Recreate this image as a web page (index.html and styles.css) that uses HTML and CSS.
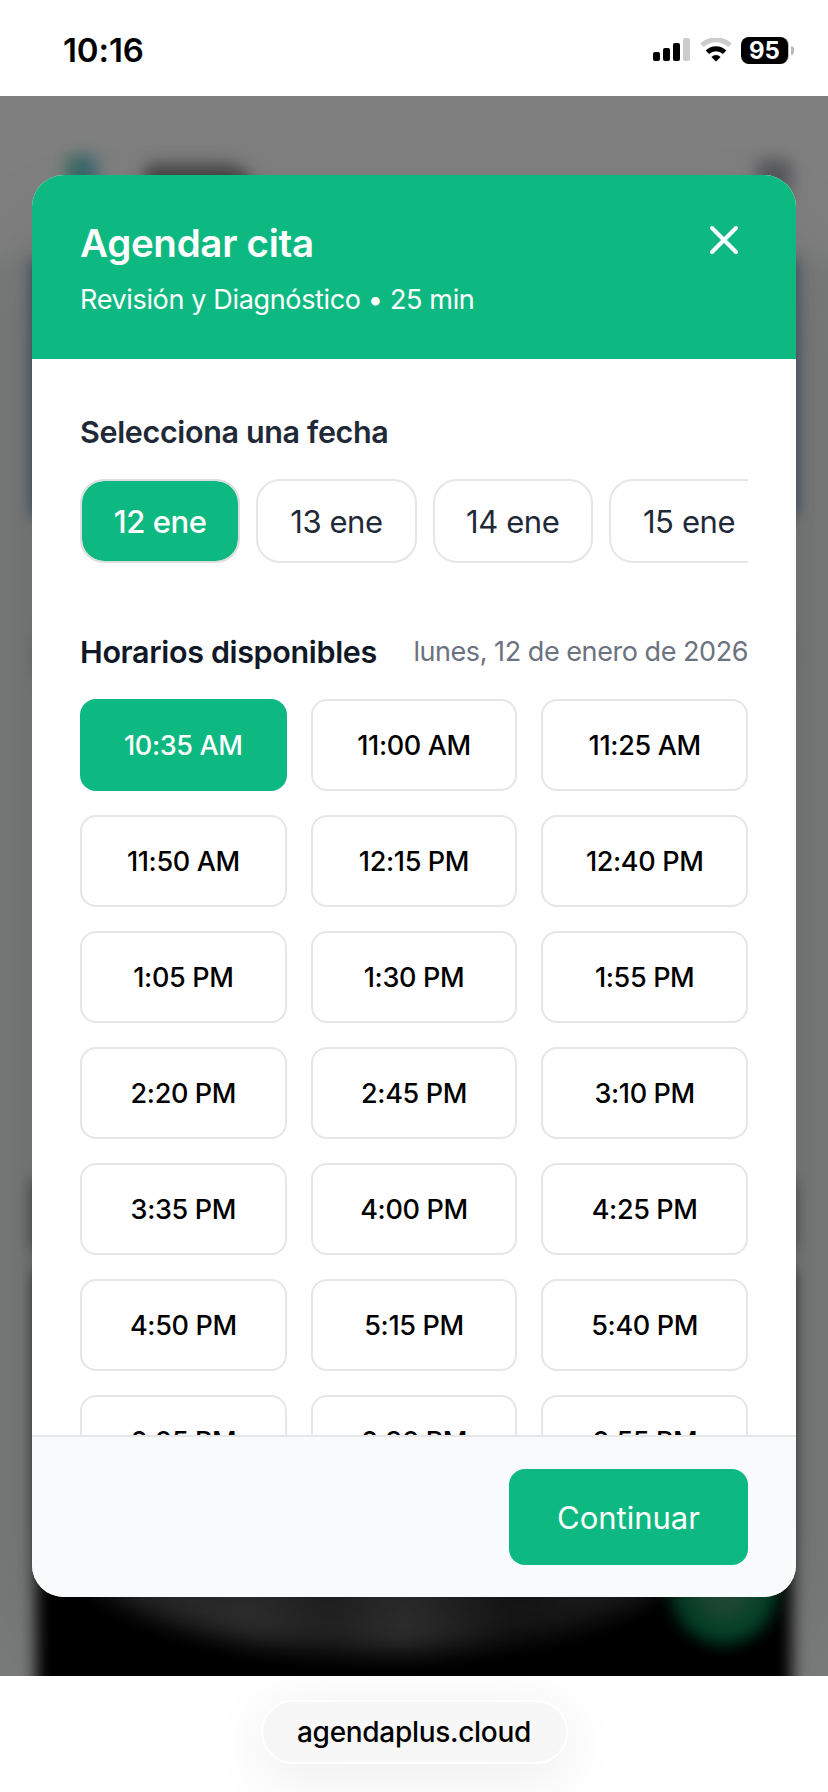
FILE: index.html
```html
<!DOCTYPE html>
<html lang="es">
<head>
  <meta charset="UTF-8" />
  <meta name="viewport" content="width=device-width, initial-scale=1" />
  <title>Agendar cita</title>
  <link rel="stylesheet" href="styles.css">
</head>
<body>

<div class="status-bar">
  <span class="clock">10:16</span>
  <div class="status-icons">
    <svg class="signal" viewBox="0 0 37 24">
      <rect x="0" y="14" width="7" height="9" rx="2"/>
      <rect x="10" y="10" width="7" height="13" rx="2"/>
      <rect x="20" y="5" width="7" height="18" rx="2"/>
      <rect class="off" x="30" y="0" width="7" height="23" rx="2"/>
    </svg>
    <svg class="wifi" viewBox="0 0 32 24">
      <path class="arc off" d="M2 7.2 A20.5 20.5 0 0 1 30 7.2"/>
      <path class="arc" d="M7.4 14.2 A12.2 12.2 0 0 1 24.6 14.2"/>
      <path d="M16 23.4 L11.4 19 A6.4 6.4 0 0 1 20.6 19 Z"/>
    </svg>
    <div class="battery"><span>95</span></div>
    <i class="battery-tip"></i>
  </div>
</div>

<main class="viewport">
  <!-- blurred page behind the modal -->
  <div class="page-behind">
    <i class="shape logo"></i>
    <i class="shape brand"></i>
    <i class="shape menu"></i>
    <i class="shape content"></i>
    <i class="shape hero"></i>
    <i class="shape card"></i>
    <i class="shape label"></i>
    <i class="shape photo"></i>
    <i class="shape glow"></i>
    <i class="shape chat"></i>
  </div>

  <div class="modal">
    <header class="modal-header">
      <div>
        <h1>Agendar cita</h1>
        <p>Revisión y Diagnóstico • 25 min</p>
      </div>
      <button class="close" aria-label="Cerrar">
        <svg viewBox="0 0 24 24"><path d="M6 18L18 6M6 6l12 12"/></svg>
      </button>
    </header>

    <div class="modal-body">
      <h2 class="date-title">Selecciona una fecha</h2>
      <div class="dates">
        <button class="date active">12 ene</button>
        <button class="date">13 ene</button>
        <button class="date">14 ene</button>
        <button class="date">15 ene</button>
      </div>

      <div class="times-head">
        <h2>Horarios disponibles</h2>
        <span>lunes, 12 de enero de 2026</span>
      </div>
      <div class="times">
        <button class="time active">10:35 AM</button>
        <button class="time">11:00 AM</button>
        <button class="time">11:25 AM</button>
        <button class="time">11:50 AM</button>
        <button class="time">12:15 PM</button>
        <button class="time">12:40 PM</button>
        <button class="time">1:05 PM</button>
        <button class="time">1:30 PM</button>
        <button class="time">1:55 PM</button>
        <button class="time">2:20 PM</button>
        <button class="time">2:45 PM</button>
        <button class="time">3:10 PM</button>
        <button class="time">3:35 PM</button>
        <button class="time">4:00 PM</button>
        <button class="time">4:25 PM</button>
        <button class="time">4:50 PM</button>
        <button class="time">5:15 PM</button>
        <button class="time">5:40 PM</button>
        <button class="time">6:05 PM</button>
        <button class="time">6:30 PM</button>
        <button class="time">6:55 PM</button>
      </div>
    </div>

    <footer class="modal-footer">
      <button class="continue">Continuar</button>
    </footer>
  </div>
</main>

<div class="url-bar">
  <div class="url">agendaplus.cloud</div>
</div>

</body>
</html>
```
FILE: styles.css
```css
* {
  box-sizing: border-box;
}
body {
  margin: 0;
  height: 1792px;
  display: flex;
  flex-direction: column;
  background: #fff;
  font-family: Inter, "Liberation Sans", sans-serif;
  overflow: hidden;
}
h1, h2, p {
  margin: 0;
}
button {
  font-family: inherit;
  padding: 0;
  border: 0;
  background: none;
  white-space: nowrap;
}

/* status bar */
.status-bar {
  flex: none;
  height: 96px;
  padding: 4px 34px 0 63px;
  display: flex;
  align-items: center;
  justify-content: space-between;
}
.clock {
  font-size: 33px;
  font-weight: 600;
  letter-spacing: -0.1px;
}
.status-icons {
  display: flex;
  align-items: center;
}
.signal {
  width: 37px;
  height: 24px;
  margin-right: 10px;
}
.wifi {
  width: 32px;
  height: 24px;
  margin-right: 9px;
}
.off {
  fill: #ccc;
}
.arc {
  fill: none;
  stroke: #000;
  stroke-width: 5;
}
.arc.off {
  fill: none;
  stroke: #ccc;
}
.battery {
  width: 47px;
  height: 27px;
  border-radius: 8px;
  background: #000;
  box-shadow: 1px 0 0 #bbb;
  color: #fff;
  font-size: 24px;
  font-weight: 700;
  line-height: 27px;
  text-align: center;
}
.battery-tip {
  width: 3px;
  height: 9px;
  margin-left: 3px;
  border-radius: 0 4px 4px 0;
  background: #bbb;
}

/* page under the overlay */
.viewport {
  flex: none;
  height: 1580px;
  padding: 79px 32px;
  position: relative;
  overflow: hidden;
  background: #7f7f7f;
}
.page-behind {
  position: absolute;
  inset: 0;
}
.shape {
  position: absolute;
  filter: blur(8px);
}
.logo {
  left: 66px;
  top: 60px;
  width: 30px;
  height: 40px;
  background: linear-gradient(90deg, #3f6d60, #2f6270);
}
.brand {
  left: 145px;
  top: 68px;
  width: 110px;
  height: 30px;
  border-radius: 10px 50px 0 0;
  background: #444;
}
.menu {
  left: 757px;
  top: 64px;
  width: 34px;
  height: 36px;
  background: #55565a;
}
.content {
  left: -40px;
  right: -40px;
  top: 160px;
  bottom: -40px;
  background: #797b7a;
}
.hero {
  left: 32px;
  right: 32px;
  top: 163px;
  height: 258px;
  background: #33475c;
}
.card {
  left: 36px;
  right: 36px;
  top: 539px;
  height: 44px;
  background: #60616a;
}
.label {
  left: 32px;
  right: 34px;
  top: 1084px;
  height: 72px;
  background: #3c3c3a;
}
.photo {
  left: 36px;
  right: 36px;
  top: 1172px;
  height: 600px;
  background: #000;
}
.glow {
  left: 60px;
  top: 1380px;
  width: 640px;
  height: 176px;
  border-radius: 0 0 50% 50% / 0 0 70% 70%;
  background: linear-gradient(90deg, #262626, #333 30%, #242424 42%, #333 54%, #181818 70%, #262626);
  filter: blur(12px);
}
.chat {
  left: 670px;
  top: 1436px;
  width: 108px;
  height: 112px;
  border-radius: 50%;
  background: radial-gradient(circle at 50% 50%, #24523c 25%, #04462a 55%);
}

/* modal */
.modal {
  position: relative;
  height: 1422px;
  display: flex;
  flex-direction: column;
  border-radius: 32px;
  overflow: hidden;
  background: #fff;
  box-shadow: 0 50px 100px -24px rgba(0, 0, 0, 0.25);
}
.modal-header {
  flex: none;
  height: 184px;
  padding: 40px 48px;
  display: flex;
  justify-content: space-between;
  background: #0eb981;
  color: #fff;
}
.modal-header h1 {
  font-size: 38.5px;
  font-weight: 600;
  line-height: 56px;
  letter-spacing: -0.3px;
}
.modal-header p {
  margin-top: 9px;
  font-size: 27px;
  font-weight: 400;
  line-height: 40px;
  letter-spacing: -0.35px;
}
.close {
  width: 48px;
  height: 48px;
  margin-top: 1px;
}
.close svg {
  display: block;
  fill: none;
  stroke: #fff;
  stroke-width: 2;
  stroke-linecap: round;
}
.modal-body {
  flex: 1;
  min-height: 0;
  padding: 48px 48px 0;
  overflow: hidden;
}
.modal-body h2 {
  padding-top: 1px;
  font-size: 30.5px;
  font-weight: 600;
  line-height: 47px;
  letter-spacing: -0.35px;
  color: #111827;
}
.modal-body .date-title {
  padding-top: 2px;
  line-height: 46px;
  color: #1f2937;
}
.dates {
  margin: 24px 0 64px;
  display: flex;
  gap: 16px;
  overflow: hidden;
}
.date {
  flex: none;
  width: 160.3px;
  height: 84px;
  border: 2px solid #e5e5ea;
  border-radius: 24px;
  font-size: 31px;
  letter-spacing: -0.4px;
  color: #1f2937;
}
.date.active {
  background: #0eb981;
  background-clip: padding-box;
  border-color: #ddd;
  color: #fff;
  font-weight: 500;
}
.times-head {
  height: 48px;
  margin-bottom: 24px;
  display: flex;
  align-items: center;
  justify-content: space-between;
  white-space: nowrap;
}
.times-head span {
  font-size: 27px;
  letter-spacing: -0.45px;
  color: #6b7280;
}
.times {
  display: grid;
  grid-template-columns: repeat(3, 1fr);
  gap: 24px;
}
.time {
  height: 92px;
  border: 2px solid #e5e5ea;
  border-radius: 16px;
  font-size: 27px;
  font-weight: 500;
  letter-spacing: -0.35px;
  color: #000;
}
.time.active {
  border-color: #0eb981;
  background: #0eb981;
  color: #fff;
}
.modal-footer {
  flex: none;
  padding: 32px 48px;
  display: flex;
  justify-content: flex-end;
  border-top: 2px solid #e5e7eb;
  background: #f9fafb;
}
.continue {
  width: 239px;
  height: 96px;
  border-radius: 16px;
  background: #0eb981;
  color: #fff;
  font-size: 31px;
}

/* browser address pill */
.url-bar {
  flex: 1;
  padding-top: 24px;
  display: flex;
  justify-content: center;
  align-items: flex-start;
  overflow: hidden;
}
.url {
  width: 307px;
  height: 64px;
  border: 2px solid #fff;
  border-radius: 32px;
  background: #f7f7f7;
  box-shadow: 0 12px 60px rgba(0, 0, 0, 0.08);
  font-size: 28px;
  font-weight: 500;
  letter-spacing: -0.3px;
  line-height: 61px;
  text-align: center;
}
```
